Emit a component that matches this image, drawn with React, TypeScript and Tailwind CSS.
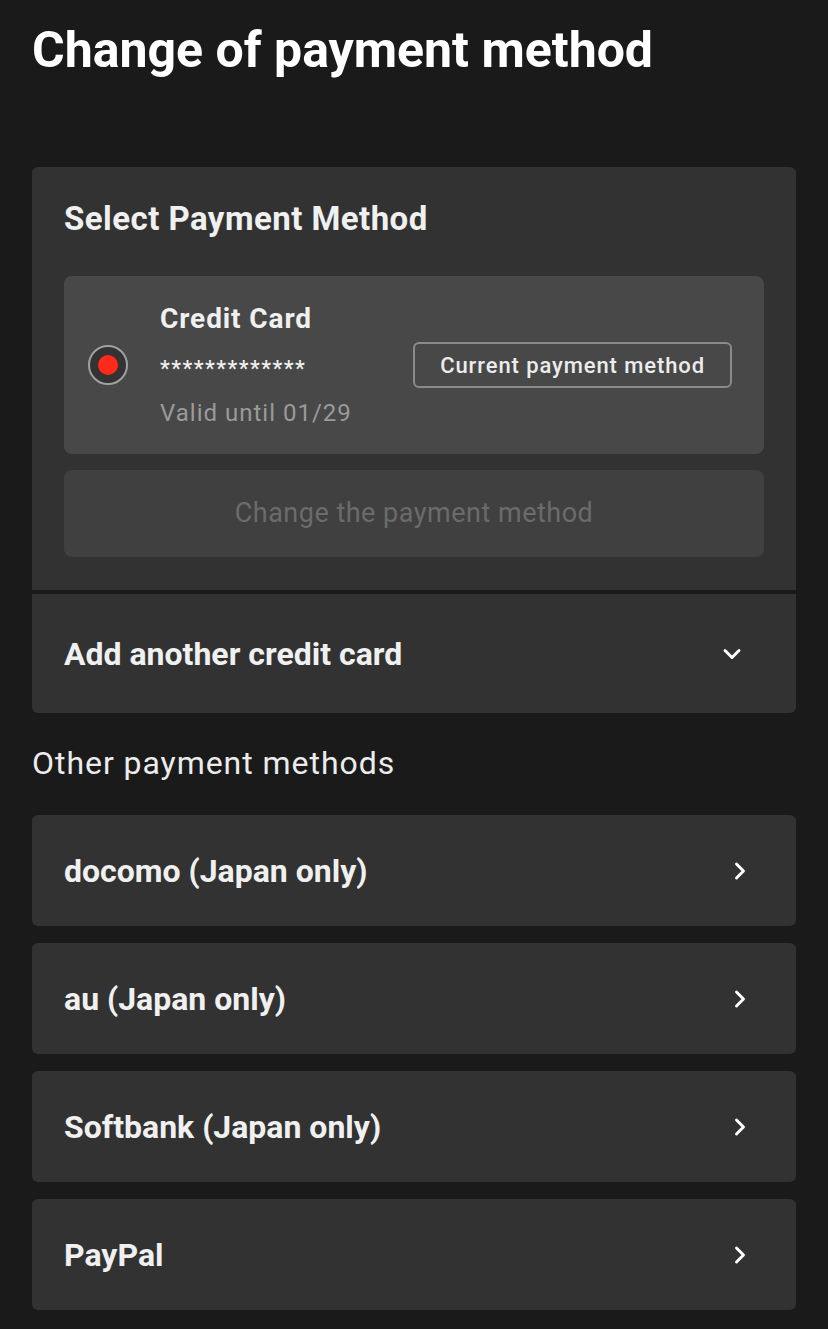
import { ChevronDown, ChevronRight } from 'lucide-react';

const otherMethods = ['docomo (Japan only)', 'au (Japan only)', 'Softbank (Japan only)', 'PayPal'];

export default function App() {
  return (
    <div
      className="min-h-[1329px] w-full bg-[#1a1a1a] px-8 pt-[20px] pb-4 text-white"
      style={{ fontFamily: 'Roboto, "Noto Sans", "Liberation Sans", sans-serif' }}
    >
      {/* title */}
      <h1 className="text-[50px] leading-[60px] font-bold text-white">Change of payment method</h1>

      {/* current card */}
      <div className="mt-[87px] rounded-md bg-[#323232] overflow-hidden">
        <div className="px-8 pt-[32px] pb-[33px]">
          <h2 className="text-[33px] leading-[40px] font-bold text-[#f0f0f0] tracking-[0.45px]">Select Payment Method</h2>

          <div className="mt-[37px] flex items-center rounded-lg bg-[#484848] pl-6 pr-8 h-[178px]">
            <div className="flex h-[40px] w-[40px] items-center justify-center rounded-full border-2 border-[#a0a0a0] bg-[#333333]">
              <div className="h-[20px] w-[20px] rounded-full bg-[#ff2a1a]" />
            </div>
            <div className="ml-8 flex-1">
              <div className="text-[28px] leading-[36px] font-bold text-[#f0f0f0] tracking-[0.9px]">Credit Card</div>
              <div className="mt-[17px] text-[22px] leading-[30px] font-medium text-[#f0f0f0] tracking-[1.5px]">*************</div>
              <div className="mt-[13px] text-[24px] leading-[32px] text-[#9a9a9a] tracking-[1px]">Valid until 01/29</div>
            </div>
            <div className="flex h-[46px] items-center rounded-md border-2 border-[#8a8a8a] px-[25px] text-[22px] font-medium text-[#ececec] tracking-[0.9px]">
              Current payment method
            </div>
          </div>

          <button
            disabled
            className="mt-4 flex h-[87px] w-full items-center justify-center rounded-lg bg-[#404040] text-[27px] text-[#6b6b6b] tracking-[0.5px]"
          >
            Change the payment method
          </button>
        </div>

        <div className="h-[4px] bg-[#1a1a1a]" />

        <div className="flex h-[119px] items-center justify-between px-8">
          <span className="text-[32px] font-bold text-[#f0f0f0]">Add another credit card</span>
          <ChevronDown className="mr-[18px] h-[28px] w-[28px] text-white" strokeWidth={2.5} />
        </div>
      </div>

      <p className="mt-[30px] text-[32px] leading-[40px] text-[#ececec] tracking-[0.95px]">Other payment methods</p>

      <div className="mt-[32px] flex flex-col gap-[17px]">
        {otherMethods.map((m) => (
          <div key={m} className="flex h-[111px] items-center justify-between rounded-md bg-[#323232] px-8">
            <span className="text-[32px] font-bold text-[#f0f0f0]">{m}</span>
            <ChevronRight className="mr-[10px] h-[28px] w-[28px] text-white" strokeWidth={2.5} />
          </div>
        ))}
      </div>
    </div>
  );
}
